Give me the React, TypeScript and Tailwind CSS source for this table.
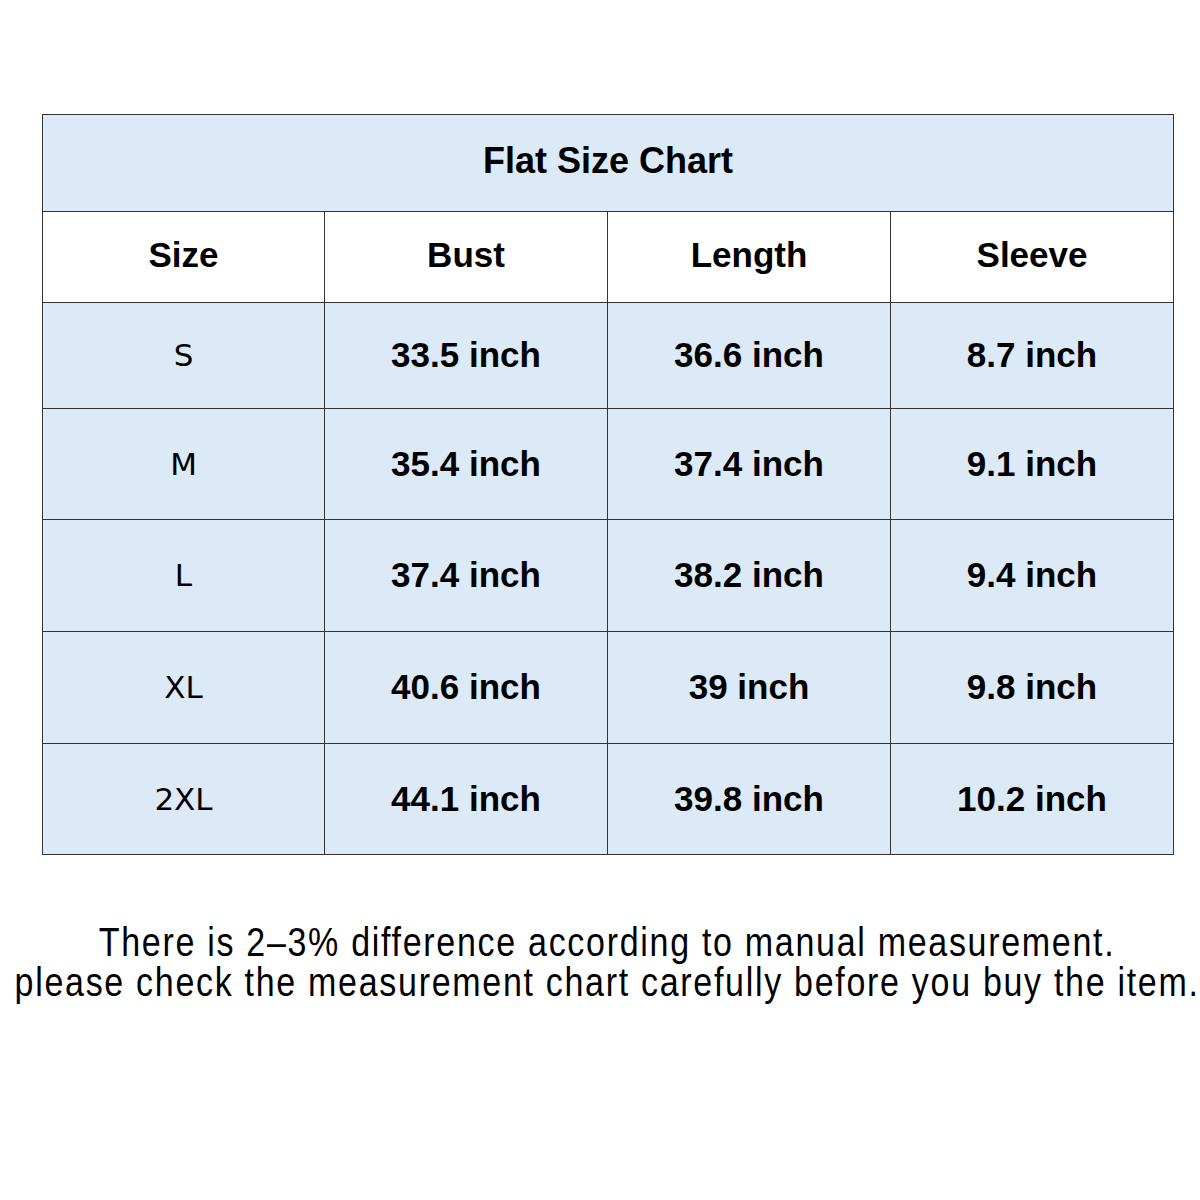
const rows = [
  { size: 'S', bust: '33.5 inch', length: '36.6 inch', sleeve: '8.7 inch', h: 'h-[106px]' },
  { size: 'M', bust: '35.4 inch', length: '37.4 inch', sleeve: '9.1 inch', h: 'h-[111px]' },
  { size: 'L', bust: '37.4 inch', length: '38.2 inch', sleeve: '9.4 inch', h: 'h-[112px]' },
  { size: 'XL', bust: '40.6 inch', length: '39 inch', sleeve: '9.8 inch', h: 'h-[112px]' },
  { size: '2XL', bust: '44.1 inch', length: '39.8 inch', sleeve: '10.2 inch', h: 'h-[111px]' },
]

const cell = 'border border-[#333333] text-center align-middle'

export default function App() {
  return (
    <div className="min-h-[1200px] w-[1200px] bg-white text-black">
      <div className="pl-[42px] pt-[114px]">
        <table className="w-[1131px] table-fixed border-collapse font-['Liberation_Sans',Arial,sans-serif]">
          <colgroup>
            <col className="w-[282px]" />
            <col className="w-[283px]" />
            <col className="w-[283px]" />
            <col className="w-[283px]" />
          </colgroup>
          <thead>
            <tr className="h-[97px] bg-[#dce9f6]">
              <th colSpan={4} className={`${cell} pb-[5px] text-[36px] font-bold`}>
                Flat Size Chart
              </th>
            </tr>
            <tr className="h-[91px] bg-white">
              <th className={`${cell} pb-[3px] text-[35px] font-bold`}>Size</th>
              <th className={`${cell} pb-[3px] text-[35px] font-bold`}>Bust</th>
              <th className={`${cell} pb-[3px] text-[35px] font-bold`}>Length</th>
              <th className={`${cell} pb-[3px] text-[35px] font-bold`}>Sleeve</th>
            </tr>
          </thead>
          <tbody className="bg-[#dce9f6]">
            {rows.map((r) => (
              <tr key={r.size} className={r.h}>
                <td className={`${cell} font-['DejaVu_Sans',Verdana,sans-serif] text-[31px] font-normal`}>
                  {r.size}
                </td>
                <td className={`${cell} text-[35px] font-bold`}>{r.bust}</td>
                <td className={`${cell} text-[35px] font-bold`}>{r.length}</td>
                <td className={`${cell} text-[35px] font-bold`}>{r.sleeve}</td>
              </tr>
            ))}
          </tbody>
        </table>
      </div>
      {/* note under the chart, narrow type */}
      <div className="mt-[67px] flex flex-col items-center pl-[14px] font-['Liberation_Sans',Arial,sans-serif] text-[40px] leading-[40px] tracking-[2px]">
        <span className="origin-center scale-x-[0.85] whitespace-nowrap">
          There is 2–3% difference according to manual measurement.
        </span>
        <span className="origin-center scale-x-[0.85] whitespace-nowrap">
          please check the measurement chart carefully before you buy the item.
        </span>
      </div>
    </div>
  )
}
